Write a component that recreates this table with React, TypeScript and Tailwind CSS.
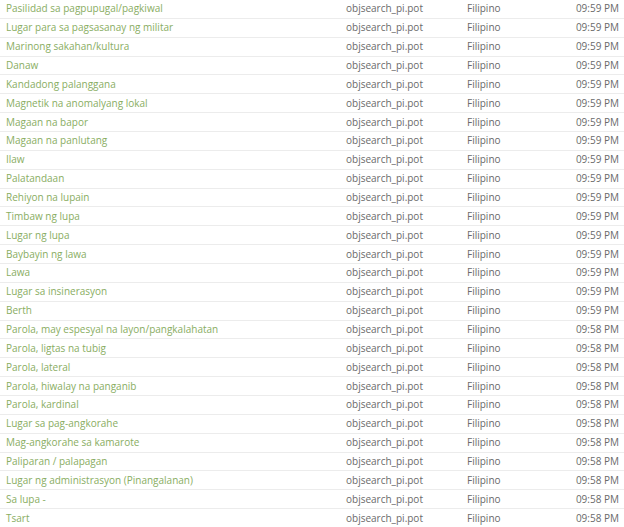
const rows: [string, string][] = [
  ['Pasilidad sa pagpupugal/pagkiwal', '09:59 PM'],
  ['Lugar para sa pagsasanay ng militar', '09:59 PM'],
  ['Marinong sakahan/kultura', '09:59 PM'],
  ['Danaw', '09:59 PM'],
  ['Kandadong palanggana', '09:59 PM'],
  ['Magnetik na anomalyang lokal', '09:59 PM'],
  ['Magaan na bapor', '09:59 PM'],
  ['Magaan na panlutang', '09:59 PM'],
  ['Ilaw', '09:59 PM'],
  ['Palatandaan', '09:59 PM'],
  ['Rehiyon na lupain', '09:59 PM'],
  ['Timbaw ng lupa', '09:59 PM'],
  ['Lugar ng lupa', '09:59 PM'],
  ['Baybayin ng lawa', '09:59 PM'],
  ['Lawa', '09:59 PM'],
  ['Lugar sa insinerasyon', '09:59 PM'],
  ['Berth', '09:59 PM'],
  ['Parola, may espesyal na layon/pangkalahatan', '09:58 PM'],
  ['Parola, ligtas na tubig', '09:58 PM'],
  ['Parola, lateral', '09:58 PM'],
  ['Parola, hiwalay na panganib', '09:58 PM'],
  ['Parola, kardinal', '09:58 PM'],
  ['Lugar sa pag-angkorahe', '09:58 PM'],
  ['Mag-angkorahe sa kamarote', '09:58 PM'],
  ['Paliparan / palapagan', '09:58 PM'],
  ['Lugar ng administrasyon (Pinangalanan)', '09:58 PM'],
  ['Sa lupa -', '09:58 PM'],
  ['Tsart', '09:58 PM'],
];

export default function App() {
  return (
    <div className="w-[624px] h-[527px] overflow-hidden bg-white font-['Open_Sans',sans-serif] text-[10px]">
      {rows.map(([name, time], i) => (
        <div
          key={i}
          className="flex items-center h-[18.87px] border-b border-[#ececec] pl-[6px] pr-[5px]"
        >
          <span className="w-[340px] text-[#89ad62]">{name}</span>
          <span className="w-[121px] text-[#6a6a6a]">objsearch_pi.pot</span>
          <span className="w-[80px] text-[#6a6a6a]">Filipino</span>
          <span className="flex-1 text-right text-[#6a6a6a]">{time}</span>
        </div>
      ))}
    </div>
  );
}
